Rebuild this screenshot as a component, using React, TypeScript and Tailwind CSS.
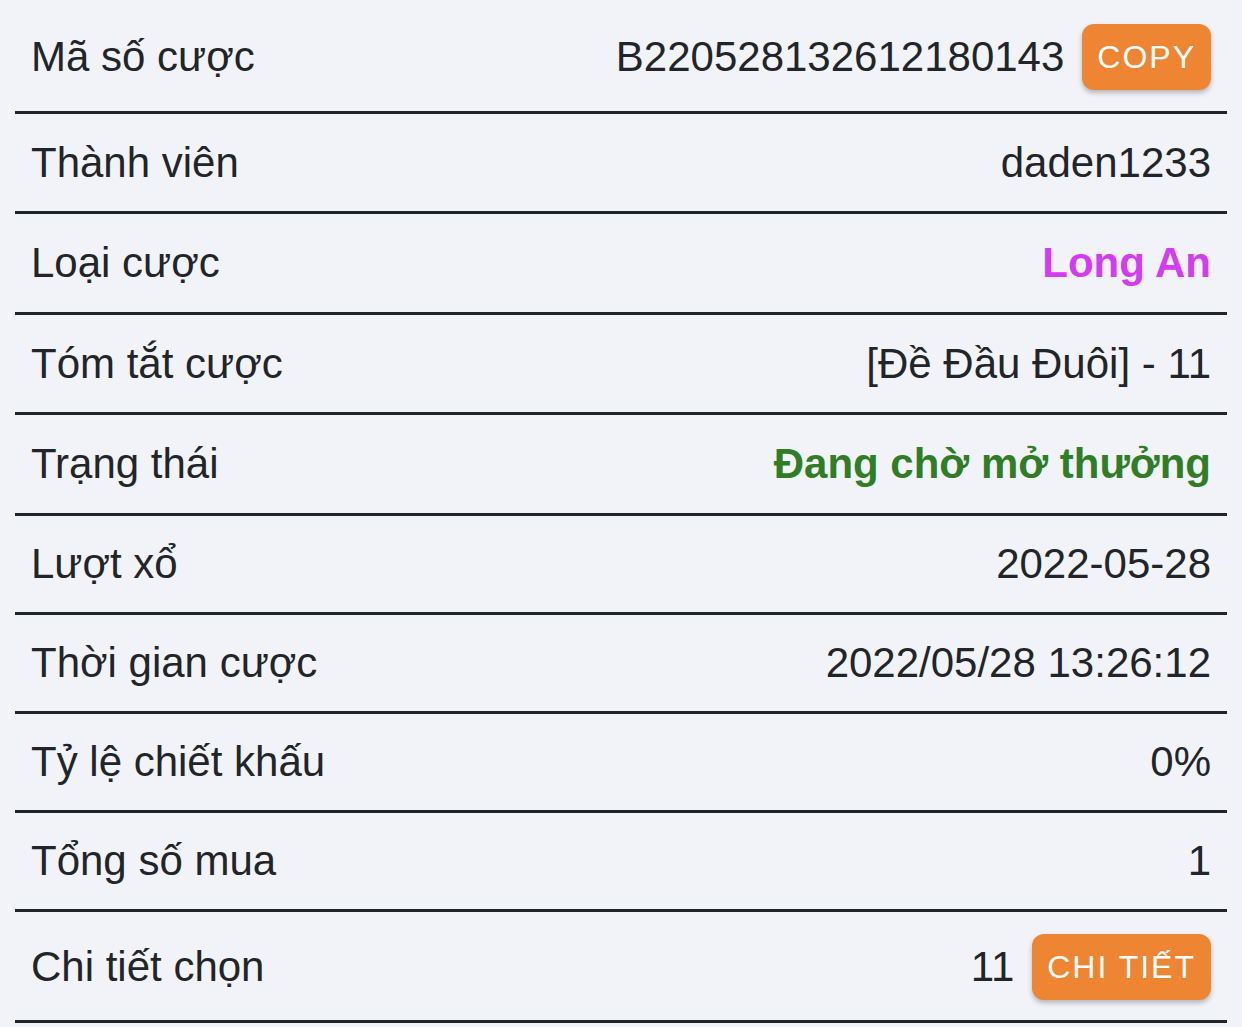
import React from "react";

type Row = {
  label: string;
  value: React.ReactNode;
  action?: string;
  height: string;
};

const rows: Row[] = [
  { label: "Mã số cược", value: "B220528132612180143", action: "Copy", height: "h-[114px] pt-[3px]" },
  { label: "Thành viên", value: "daden1233", height: "h-[100px]" },
  {
    label: "Loại cược",
    value: <span className="font-bold text-[#d53af5]">Long An</span>,
    height: "h-[101px]",
  },
  { label: "Tóm tắt cược", value: "[Đề Đầu Đuôi] - 11", height: "h-[100px]" },
  {
    label: "Trạng thái",
    value: <span className="font-semibold text-[#2f7d24]">Đang chờ mở thưởng</span>,
    height: "h-[101px]",
  },
  { label: "Lượt xổ", value: "2022-05-28", height: "h-[99px]" },
  { label: "Thời gian cược", value: "2022/05/28 13:26:12", height: "h-[99px]" },
  { label: "Tỷ lệ chiết khấu", value: "0%", height: "h-[99px]" },
  { label: "Tổng số mua", value: "1", height: "h-[99px]" },
  { label: "Chi tiết chọn", value: "11", action: "Chi tiết", height: "h-[111px] pt-[2px]" },
];

const App: React.FC = () => {
  return (
    <div
      className="min-h-screen bg-[#f2f3f8] px-[15px] text-[42px] text-[#212529]"
      style={{ fontFamily: '"Liberation Sans", Arial, sans-serif' }}
    >
      {rows.map((row) => (
        <div
          key={row.label}
          className={
            "flex items-center justify-between border-b-[3px] border-[#212529] px-4 " +
            row.height
          }
        >
          <span className="leading-none">{row.label}</span>
          <div className="flex items-center gap-[18px]">
            <span className="leading-none">{row.value}</span>
            {row.action && (
              <button
                className="flex h-[66px] items-center rounded-[12px] bg-[#ee8532] px-[15px] text-[32px] uppercase tracking-[2px] text-white shadow-[0_3px_5px_rgba(0,0,0,0.25)]"
                style={{ fontFamily: '"Liberation Sans", Arial, sans-serif' }}
              >
                {row.action}
              </button>
            )}
          </div>
        </div>
      ))}
    </div>
  );
};

export default App;
